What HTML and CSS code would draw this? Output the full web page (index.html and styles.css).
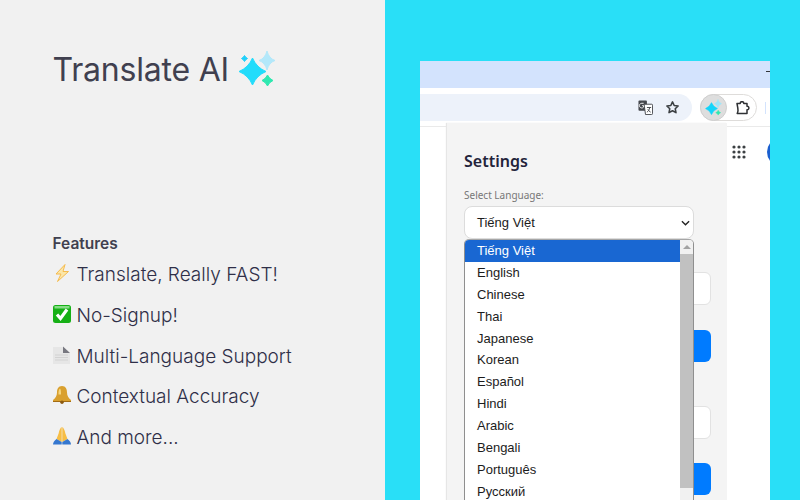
FILE: index.html
```html
<!DOCTYPE html>
<html lang="en">
<head>
<meta charset="utf-8">
<title>Translate AI</title>
<link rel="stylesheet" href="styles.css">
</head>
<body>
<main class="page">
  <section class="intro">
    <h1 class="title">Translate AI
      <svg class="sparkles" viewBox="0 0 38 38" aria-hidden="true">
        <g stroke-linejoin="round" stroke-width="1">
          <path fill="#b3e8fa" stroke="#b3e8fa" d="M29 1 Q31 8.500 37 10.500 Q31 12.500 29 20 Q27 12.500 21 10.500 Q27 8.500 29 1Z"/>
          <path fill="#22dcfb" stroke="#22dcfb" d="M14.500 8 Q18.500 17.500 28 21.500 Q18.500 25.500 14.500 35 Q10.500 25.500 1 21.500 Q10.500 17.500 14.500 8Z"/>
          <path fill="#2fe8b0" stroke="#2fe8b0" d="M29.500 25 Q31.200 28.800 35 30.500 Q31.200 32.200 29.500 36 Q27.800 32.200 24 30.500 Q27.800 28.800 29.500 25Z"/>
          <path fill="#1fd0fb" stroke="#1fd0fb" d="M6.500 5.500 Q7.500 7.500 9.500 8.500 Q7.500 9.500 6.500 11.500 Q5.500 9.500 3.500 8.500 Q5.500 7.500 6.500 5.500Z"/>
        </g>
      </svg>
    </h1>
    <h2 class="features-heading">Features</h2>
    <ul class="features">
      <li class="feature">
        <svg class="emoji" viewBox="0 0 18 18" aria-hidden="true"><path fill="#fbe6a8" stroke="#f5bb4e" stroke-width="1" stroke-linejoin="round" d="M12 .5 3 10h5L4.500 17.500 15.500 7.500H10Z"/></svg>
        Translate, Really FAST!
      </li>
      <li class="feature">
        <svg class="emoji" viewBox="0 0 18 18" aria-hidden="true"><rect width="18" height="18" rx="2.500" fill="#16b016"/><rect x="1.500" y="1" width="15" height="2.500" fill="#86dc86"/><path fill="none" stroke="#fff" stroke-width="3.200" d="M4 9.500 7.500 13.500 14 4.500"/></svg>
        No-Signup!
      </li>
      <li class="feature">
        <svg class="emoji" viewBox="0 0 18 18" aria-hidden="true"><path fill="#e6e6e6" d="M0 1h10l7 6v11H0Z"/><path fill="#77777f" d="M10 .5 17 7h-7Z"/><path stroke="#d2d2d2" d="M2 9h13M2 11.500h13M2 14h13"/></svg>
        Multi-Language Support
      </li>
      <li class="feature">
        <svg class="emoji" viewBox="0 0 18 18" aria-hidden="true"><path fill="#d9a02f" d="M9 0c3.800 0 5 3 5 6.500 0 3.500 1.500 5.500 4 7.500v1.500H0V14c2.500-2 4-4 4-7.500C4 3 5.200 0 9 0Z"/><path fill="#f6d67e" d="M7 2.500C5.500 3.500 5.500 6 5.500 8.500L8 8.500c0-2.500 0-5-1-6Z"/><path fill="#a36c14" d="M0 15h18v1H0Z"/><circle cx="9" cy="16.300" r="1.700" fill="#8c5a10"/></svg>
        Contextual Accuracy
      </li>
      <li class="feature">
        <svg class="emoji" viewBox="0 0 18 18" aria-hidden="true"><path fill="#f6bd45" d="M8.700 0C7.500.5 6.300 3 5.600 6.500L3.500 12 8.700 15ZM9.300 0C10.500.5 11.700 3 12.400 6.500L14.500 12 9.300 15Z"/><path fill="#3577cf" d="M0 17.500c0-2 1.500-4 3.500-5.500L8.700 15v2.500ZM18 17.500c0-2-1.500-4-3.500-5.500L9.300 15v2.500Z"/></svg>
        And more...
      </li>
    </ul>
  </section>
  <section class="stage">
    <div class="browser">
      <div class="tabstrip"><span class="minimize"></span></div>
      <div class="toolbar">
        <div class="omnibox">
          <svg class="tool-icon" viewBox="0 0 16 16" aria-hidden="true"><rect x="0.500" y="0.500" width="9" height="11" rx="1" fill="#44474c"/><path fill="#fff" stroke="#44474c" d="M6.500 4.500h8a1 1 0 0 1 1 1v9a1 1 0 0 1-1 1H8Z"/><path stroke="#44474c" fill="none" d="M9.500 8h4.500M12.500 8c-.5 2.500-1.500 4-3 5M10.500 10c.5 1 1.500 2.200 3 3"/><path stroke="#fff" fill="none" d="M6 3.500H4a2.500 2.500 0 1 0 2 4V6H4.500"/></svg>
          <svg class="tool-icon" viewBox="0 0 16 16" aria-hidden="true"><path fill="none" stroke="#3c4043" stroke-width="1.700" stroke-linejoin="round" d="M8 2l1.800 3.900 4.200.5-3.100 2.900.8 4.200L8 11.400l-3.700 2.100.8-4.200L2 6.400l4.200-.5Z"/></svg>
        </div>
        <div class="ext-pill">
          <span class="ext-active">
            <svg class="ext-spark" viewBox="0 0 38 38" aria-hidden="true">
              <g stroke-linejoin="round" stroke-width="1">
                <path fill="#9fe6fa" stroke="#9fe6fa" d="M29 1 Q30.500 8.500 37 10.500 Q30.500 12.500 29 20 Q27.500 12.500 21 10.500 Q27.500 8.500 29 1Z"/>
                <path fill="#12d5fb" stroke="#12d5fb" d="M14.500 8 Q18.500 17.500 28 21.500 Q18.500 25.500 14.500 35 Q10.500 25.500 1 21.500 Q10.500 17.500 14.500 8Z"/>
                <path fill="#2fe8b0" stroke="#2fe8b0" d="M29.500 25 Q30.800 29.200 35 30.500 Q30.800 31.800 29.500 36 Q28.200 31.800 24 30.500 Q28.200 29.200 29.500 25Z"/>
              </g>
            </svg>
          </span>
          <svg class="puzzle" viewBox="0 0 14 14" aria-hidden="true"><path fill="none" stroke="#2f3134" stroke-width="1.500" stroke-linejoin="round" d="M1 2.500h3.200C4.200 0 7.800 0 7.800 2.500H11v2.700c2.500-.3 2.500 3.900 0 3.600v3.700H1.200c.5-1 .8-1.800.8-3C2 7.500 1.500 5 1 2.500Z"/></svg>
        </div>
        <span class="toolbar-sep"></span>
      </div>
      <div class="content">
        <div class="popup">
          <h3 class="popup-title">Settings</h3>
          <label class="field-label">Select Language:</label>
          <div class="select-box">Tiếng Việt
            <svg class="chevron" viewBox="0 0 10 6" aria-hidden="true"><path fill="none" stroke="#222" stroke-width="1.500" d="M1 1l4 4 4-4"/></svg>
          </div>
          <div class="ghost-input first"></div>
          <div class="ghost-button"></div>
          <div class="ghost-input second"></div>
          <div class="ghost-button last"></div>
          <div class="listbox">
            <ul class="options">
              <li class="option selected">Tiếng Việt</li>
              <li class="option">English</li>
              <li class="option">Chinese</li>
              <li class="option">Thai</li>
              <li class="option">Japanese</li>
              <li class="option">Korean</li>
              <li class="option">Español</li>
              <li class="option">Hindi</li>
              <li class="option">Arabic</li>
              <li class="option">Bengali</li>
              <li class="option">Português</li>
              <li class="option">Русский</li>
            </ul>
            <div class="scrollbar">
              <span class="scroll-arrow"></span>
              <span class="scroll-thumb"></span>
            </div>
          </div>
        </div>
        <aside class="apps">
          <svg class="grid-icon" viewBox="0 0 14 14" aria-hidden="true">
            <g fill="#3c4043"><circle cx="2" cy="2" r="1.600"/><circle cx="7" cy="2" r="1.600"/><circle cx="12" cy="2" r="1.600"/><circle cx="2" cy="7" r="1.600"/><circle cx="7" cy="7" r="1.600"/><circle cx="12" cy="7" r="1.600"/><circle cx="2" cy="12" r="1.600"/><circle cx="7" cy="12" r="1.600"/><circle cx="12" cy="12" r="1.600"/></g>
          </svg>
          <span class="avatar"></span>
        </aside>
      </div>
    </div>
  </section>
</main>
</body>
</html>
```

FILE: styles.css
```css
* { box-sizing: border-box; }
html, body { margin: 0; height: 100%; }
body { overflow: hidden; }
ul { list-style: none; margin: 0; padding: 0; }

.page { display: flex; width: 800px; height: 500px; overflow: hidden; }

.intro {
  width: 385px;
  flex: none;
  background: #f1f1f1;
  padding: 49px 0 0 52.500px;
  font-family: Inter, sans-serif;
}
.title {
  display: flex;
  align-items: center;
  gap: 9.500px;
  margin: 0;
  height: 40px;
  font-size: 32px;
  letter-spacing: -0.200px;
  font-weight: 400;
  color: #40404f;
}
.sparkles { width: 38px; height: 38px; }
.features-heading {
  margin: 146px 0 0;
  font-size: 15.500px;
  line-height: 17px;
  font-weight: 600;
  color: #40404f;
}
.features { margin-top: 2.200px; }
.feature {
  display: flex;
  align-items: center;
  gap: 6px;
  height: 40.800px;
  font-size: 19px;
  font-weight: 300;
  color: #2f2f48;
}
.emoji { width: 18px; height: 18px; flex: none; margin-top: -3px; }

.stage {
  flex: none;
  width: 415px;
  background: #29dff7;
  padding: 61px 30px 0 35px;
}
.browser {
  width: 350px;
  height: 439px;
  display: flex;
  flex-direction: column;
  background: #fff;
  overflow: hidden;
}
.tabstrip {
  height: 27px;
  flex: none;
  display: flex;
  justify-content: flex-end;
  padding-top: 10px;
  background: #d3e3fd;
}
.minimize { width: 4px; height: 1px; background: #33363a; }
.toolbar {
  height: 39px;
  flex: none;
  display: flex;
  align-items: flex-start;
  padding-top: 6px;
  border-bottom: 1px solid #eaeaea;
  background: #fff;
}
.omnibox {
  width: 272px;
  height: 27px;
  flex: none;
  display: flex;
  align-items: center;
  justify-content: flex-end;
  gap: 12px;
  padding-right: 12px;
  background: #edf2fa;
  border-radius: 0 14px 14px 0;
}
.tool-icon { width: 15px; height: 15px; }
.ext-pill {
  margin-left: 8px;
  width: 57px;
  height: 27px;
  flex: none;
  display: flex;
  align-items: center;
  justify-content: space-between;
  padding-right: 6px;
  border: 1px solid #dedcda;
  border-radius: 14px;
}
.ext-active {
  width: 27px;
  height: 27px;
  margin: -1px;
  border-radius: 50%;
  background: #dedede;
  border: 1px solid #cfcfcf;
  display: flex;
  align-items: center;
  justify-content: center;
}
.ext-spark { width: 17px; height: 17px; }
.puzzle { width: 14px; height: 14px; }
.toolbar-sep {
  width: 1px;
  height: 12px;
  margin: 8px 0 0 8px;
  background: #d3e3fd;
}

.content {
  flex: 1;
  display: flex;
  padding-left: 27px;
  min-height: 0;
}
.popup {
  position: relative;
  width: 280px;
  height: 400px;
  margin-top: -4px;
  flex: none;
  padding: 27px 16px 0 17px;
  background: #f4f4f4;
  box-shadow: -1px 0 1px #e6e6e6;
  font-family: "Noto Sans", sans-serif;
}
.popup-title {
  margin: 0;
  font-size: 16px;
  line-height: 22px;
  font-weight: 600;
  color: #23233a;
}
.field-label {
  display: block;
  margin-top: 16px;
  font-size: 10px;
  line-height: 14px;
  color: #777;
}
.select-box {
  position: relative;
  display: flex;
  align-items: center;
  width: 230px;
  height: 33px;
  margin-top: 4px;
  padding-left: 12px;
  background: #fff;
  border: 1px solid #dcdcdc;
  border-radius: 8px;
  font-family: "Liberation Sans", sans-serif;
  font-size: 13px;
  color: #1c1c1c;
}
.chevron {
  position: absolute;
  right: 3px;
  top: 13px;
  width: 9px;
  height: 6px;
}
.ghost-input {
  height: 33px;
  background: #fff;
  border: 1px solid #e2e2e2;
  border-radius: 6px;
}
.ghost-input.first { margin-top: 33px; }
.ghost-input.second { margin-top: 44px; }
.ghost-button {
  height: 32px;
  margin-top: 25px;
  background: #007bff;
  border-radius: 6px;
}
.ghost-button.last { margin-top: 24px; }

.listbox {
  position: absolute;
  left: 17px;
  top: 116px;
  width: 230px;
  height: 270px;
  display: flex;
  background: #fff;
  border: 1px solid #8f8f8f;
  border-bottom: 0;
  border-top-color: #a6a6a6;
  border-radius: 5px 5px 0 0;
  overflow: hidden;
  font-family: "Liberation Sans", sans-serif;
  font-size: 13px;
  color: #1c1c1c;
}
.options { flex: 1; }
.option {
  height: 21.900px;
  line-height: 21.900px;
  padding-left: 12px;
}
.option.selected { background: #1967d2; color: #fff; }
.scrollbar {
  width: 13px;
  flex: none;
  display: flex;
  flex-direction: column;
  background: #f1f1f1;
}
.scroll-arrow {
  width: 0;
  height: 0;
  margin: 5px auto 5px;
  border-left: 4px solid transparent;
  border-right: 4px solid transparent;
  border-bottom: 4px solid #a3a3a3;
}
.scroll-thumb {
  height: 234px;
  background: #c1c1c1;
}

.apps {
  flex: none;
  display: flex;
  align-items: flex-start;
  padding: 18px 0 0 5px;
}
.grid-icon { width: 14px; height: 14px; flex: none; }
.avatar {
  width: 28px;
  height: 28px;
  flex: none;
  margin: -7px 0 0 21px;
  border-radius: 50%;
  background: #1a5fd0;
}
```
